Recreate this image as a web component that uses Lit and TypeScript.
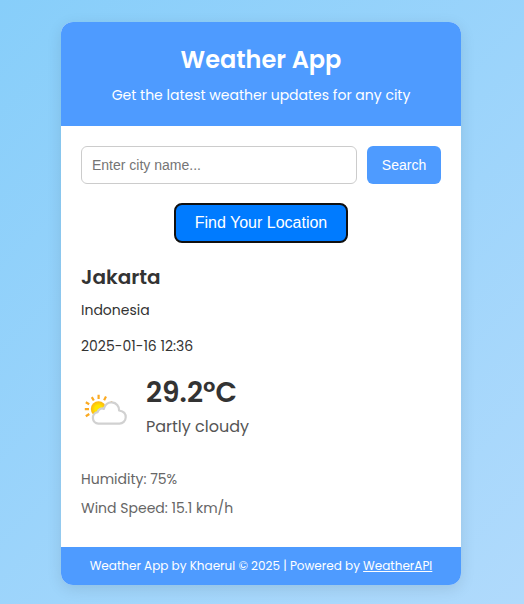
import { LitElement, html, css } from "lit";
import { customElement, state } from "lit/decorators.js";

@customElement("partly-cloudy-icon")
export class PartlyCloudyIcon extends LitElement {
  static styles = css`
    :host { display: block; width: 50px; height: 50px; flex: none; }
    svg { display: block; }
  `;

  render() {
    return html`
      <svg width="50" height="50" viewBox="0 0 50 50" fill="none" aria-label="Partly cloudy">
        <defs>
          <radialGradient id="sun">
            <stop offset="0.45" stop-color="#ffe600" />
            <stop offset="1" stop-color="#fcb415" />
          </radialGradient>
        </defs>
        <g stroke="#fbaa22" stroke-width="2.2">
          <path d="M17.6 9.8v4.2M25 11.6l-1.9 3.6M10.8 12.1l2 3.4M4.8 17.2l3.4 2M31.4 17l-3.2 2M3.8 24.1h4.2M4.8 31.2l3.5-2.2" />
        </g>
        <circle cx="17.5" cy="24" r="7.7" fill="url(#sun)" />
        <path
          d="M17.3 38.6a5.8 5.8 0 0 1-.6-11.5c.5-2.9 3.7-4.4 6.1-3.2 1.1-4.3 4.4-6.8 8.1-6.5 4.4.3 7.4 3.7 7.2 8.1 4.2.6 6.8 3.2 6.6 7a6.3 6.3 0 0 1-6.4 6.1z"
          fill="#fff" stroke="#d1d1d1" stroke-width="2.2" stroke-linejoin="round"
        />
      </svg>
    `;
  }
}

@customElement("app-root")
export class AppRoot extends LitElement {
  static styles = css`
    :host {
      display: flex;
      justify-content: center;
      box-sizing: border-box;
      width: 100%;
      height: 604px;
      padding: 22px 63px 19px 61px;
      background: linear-gradient(135deg, #87cefa, #b0dafc);
      color: #333;
      font-family: Poppins, Inter, sans-serif;
      font-feature-settings: "cv11";
    }
    * { box-sizing: border-box; margin: 0; }
    .card {
      display: flex;
      flex-direction: column;
      width: 400px;
      height: 563px;
      overflow: hidden;
      border-radius: 12px;
      background: #fff;
      box-shadow: 0 4px 15px rgba(0, 0, 0, 0.1);
      white-space: nowrap;
    }
    header {
      height: 104px;
      padding: 20px;
      background: #4e9bff;
      color: #fff;
      text-align: center;
    }
    h1 { font-size: 24px; line-height: 36px; font-weight: 600; }
    .tagline { margin-top: 6px; font-size: 14px; line-height: 22px; }
    main { flex: 1; padding: 20px; }
    .search { display: flex; gap: 10px; }
    input, button { font-family: "Liberation Sans", Arial, sans-serif; }
    input {
      flex: 1;
      min-width: 0;
      height: 38px;
      padding: 0 10px;
      border: 1px solid #ccc;
      border-radius: 6px;
      outline: none;
      background: #fff;
      font-size: 14px;
    }
    input::placeholder { color: #757575; }
    .submit {
      width: 74px;
      height: 38px;
      padding: 0;
      border: 0;
      border-radius: 6px;
      background: #4e9bff;
      color: #fff;
      font-size: 14px;
    }
    .locate {
      display: block;
      width: 174px;
      height: 40px;
      margin: 19px auto;
      padding: 0;
      border: 2px solid #101010;
      border-radius: 8px;
      background: #007bff;
      color: #fff;
      font-size: 16px;
    }
    h2 { font-size: 20px; line-height: 30px; font-weight: 600; }
    .line { font-size: 14px; line-height: 22px; }
    .country { margin-top: 7px; }
    .time { margin-top: 14px; }
    .current { display: flex; align-items: flex-start; gap: 15px; margin-top: 15px; }
    .current partly-cloudy-icon { margin-top: 13px; }
    .temp { font-size: 28px; line-height: 42px; font-weight: 600; }
    .condition { margin-top: 1px; font-size: 16px; line-height: 24px; color: #555; }
    .details { display: grid; gap: 7px; margin-top: 29px; color: #666; }
    footer {
      height: 38px;
      padding: 10px;
      background: #4e9bff;
      color: #fff;
      font-size: 12px;
      line-height: 18px;
      text-align: center;
    }
    a { color: inherit; text-decoration: underline; }
  `;

  @state() private weather = {
    city: "Jakarta",
    country: "Indonesia",
    time: "2025-01-16 12:36",
    temp: "29.2°C",
    condition: "Partly cloudy",
    humidity: "75%",
    wind: "15.1 km/h",
  };

  render() {
    const w = this.weather;
    return html`
      <div class="card">
        <header>
          <h1>Weather App</h1>
          <p class="tagline">Get the latest weather updates for any city</p>
        </header>
        <main>
          <div class="search">
            <input type="text" placeholder="Enter city name..." />
            <button class="submit">Search</button>
          </div>
          <button class="locate">Find Your Location</button>
          <h2>${w.city}</h2>
          <p class="line country">${w.country}</p>
          <p class="line time">${w.time}</p>
          <div class="current">
            <partly-cloudy-icon></partly-cloudy-icon>
            <div>
              <p class="temp">${w.temp}</p>
              <p class="condition">${w.condition}</p>
            </div>
          </div>
          <div class="details">
            <p class="line humidity">Humidity: ${w.humidity}</p>
            <p class="line wind">Wind Speed: ${w.wind}</p>
          </div>
        </main>
        <footer>Weather App by Khaerul © 2025 | Powered by <a href="#">WeatherAPI</a></footer>
      </div>
    `;
  }
}
